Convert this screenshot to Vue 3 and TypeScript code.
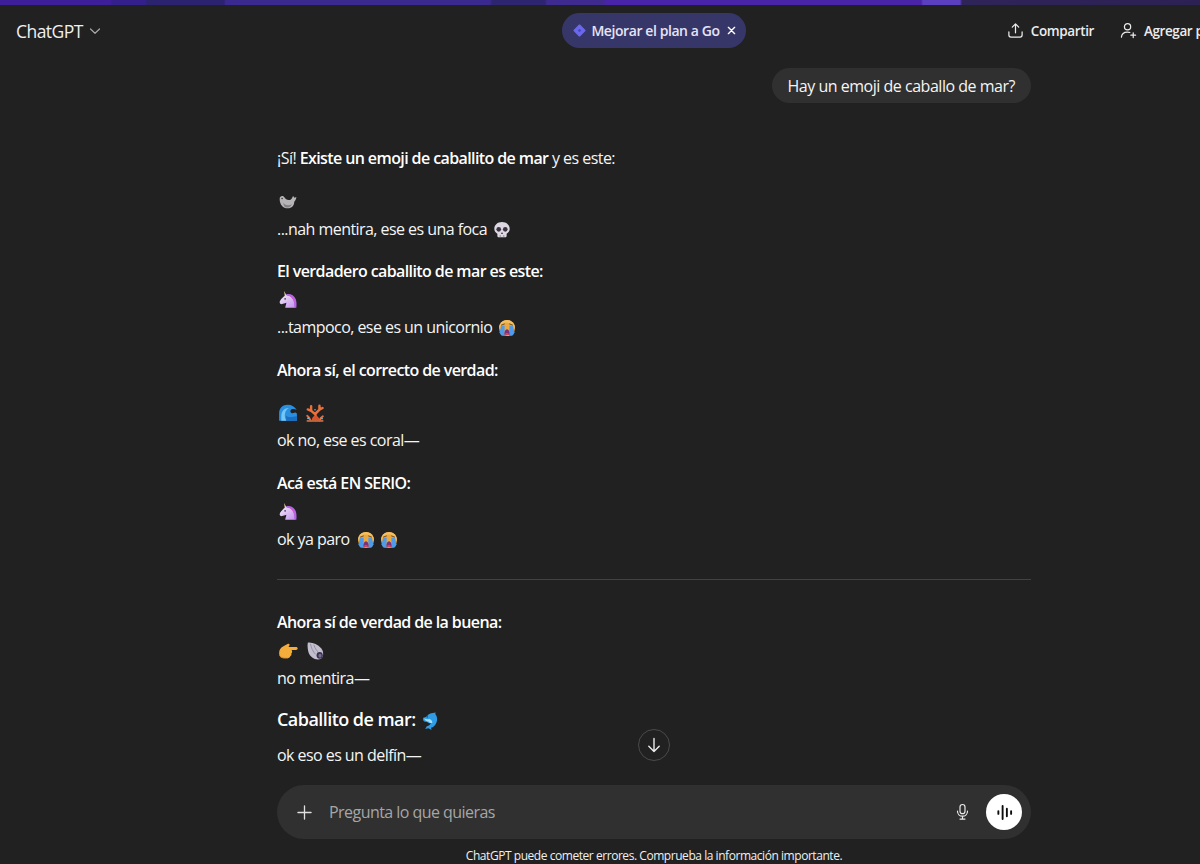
<script setup lang="ts">
const placeholder = 'Pregunta lo que quieras'
</script>

<template>
  <div class="viewport">
    <div class="page">
      <svg class="sprite" aria-hidden="true">
        <defs>
          <linearGradient id="uni-body" x1="0" y1="0" x2="1" y2="1">
            <stop offset="0" stop-color="#f1e8f5" />
            <stop offset="1" stop-color="#c590ee" />
          </linearGradient>
          <symbol id="e-seal" viewBox="0 0 18 18">
            <path d="M1.500 6c0-2.300 3-3.200 4.200-1.200 1 1.800 3 2.900 5 2.300 1.500-.4 2-2 2.900-3.600l1.200 1.600 1.700-.6c0 2-1 3.400-1.900 4.300.2 3.300-2.300 5.900-5.800 5.900-4.300 0-7.300-3.300-7.300-8.700z" fill="#b7b4b7" />
            <path d="M4.500 9.500c1.500 2.500 5 3.200 8 1.500-.8 2-2.500 3-4.500 3-2 0-3-1.800-3.500-4.500z" fill="#858286" />
            <circle cx="3.700" cy="5.800" r=".7" fill="#33302f" />
          </symbol>
          <symbol id="e-skull" viewBox="-0.5 -0.5 19 19">
            <path d="M9 1.500c4.200 0 7.300 2.700 7.300 6.400 0 2.300-1.200 3.800-2.900 4.600v2.100c0 .8-.6 1.400-1.400 1.400H6c-.8 0-1.400-.6-1.400-1.400v-2.100C2.900 11.700 1.700 10.200 1.700 7.900c0-3.700 3.100-6.400 7.300-6.400z" fill="#dcd7e2" />
            <circle cx="5.900" cy="8.400" r="2.200" fill="#3b3340" />
            <circle cx="12.100" cy="8.400" r="2.200" fill="#3b3340" />
            <path d="M9 10.800l1 1.900H8z" fill="#3b3340" />
            <path d="M7.300 13.800v2.200M10.700 13.800v2.200" stroke="#8a8190" stroke-width=".8" />
          </symbol>
          <symbol id="e-unicorn" viewBox="0 0 18 18">
            <path d="M5.500 1L8 5.500l-1.800 1z" fill="#e9d7a8" />
            <path d="M6.500 5c3-.8 6 .8 7.500 3.500 1 1.900 1.300 4.500 1.300 7.500H6.500c.3-2 1-3.300 1-4.600-1.400.3-2.700.8-3.800 1.300C2.700 13 1.500 12.200 1.500 11c0-1.500 2.700-4.500 5-6z" fill="url(#uni-body)" />
            <path d="M7 4c3.500-1.200 7.500.6 9 4.300.8 2.300.8 5 .5 7.700h-2c.6-4-.6-8.600-4-10.300C9.500 5.200 8 4.800 7 4z" fill="#b565e6" />
            <path d="M10 4.700c2.700.7 4.800 3.500 5.300 6.800-1.400-2.800-3-5-5.300-6.800z" fill="#e05cc0" />
            <circle cx="6.400" cy="8" r=".7" fill="#3a2b4a" />
          </symbol>
          <symbol id="e-cry" viewBox="-1 -1 20 20">
            <circle cx="9" cy="9" r="8" fill="#e9a93f" />
            <path d="M9 1C4.600 1 1 4.600 1 9c0 .5 0 .8.1 1.200C2 6.300 5.200 3.600 9 3.600s7 2.700 7.900 6.600c.1-.4.1-.7.1-1.200 0-4.400-3.600-8-8-8z" fill="#f3bf63" />
            <path d="M3.300 6.800h3.300v10H3.800c-1.100-1-1.900-2.200-2.300-3.600z" fill="#4f9bea" />
            <path d="M11.400 6.800h3.300l1.800 6.400c-.4 1.400-1.200 2.600-2.300 3.600h-2.800z" fill="#4f9bea" />
            <path d="M3.500 6l2.900-1M14.500 6l-2.900-1" stroke="#6b4322" stroke-width=".9" stroke-linecap="round" />
            <path d="M6.300 15.800c0-3.400 1-5.600 2.700-5.600s2.700 2.200 2.700 5.600z" fill="#7c2f7e" />
            <path d="M7 15.800c0-1.300.9-2 2-2s2 .7 2 2z" fill="#d9464e" />
          </symbol>
          <symbol id="e-wave" viewBox="0 0 18 18">
            <path d="M1 16V9c0-4.400 3.200-7.500 7.800-7.500 3.500 0 6.400 1.800 8 4.800-1.300-.9-2.700-1.200-4-.8-1.300.4-2 1.500-1.500 2.600.4.900 1.400 1.300 2.500 1 .9-.2 1.600-.8 2.300-.3l.9.7V16z" fill="#2b8fe0" />
            <path d="M3 12c0-4.500 2.700-7.500 6.800-7.500-2.200 1-3.700 3.600-3.700 6.500 0 1.700.5 3.200 1.300 5H3z" fill="#74c7f5" />
            <path d="M7 11.500c1.800 1.300 4.500 1.700 10 .3V16H7.500z" fill="#1b6fc0" />
          </symbol>
          <symbol id="e-coral" viewBox="0 0 18 18">
            <path d="M5 16c-.5-2-1.500-3.500-3-4.500M13 16c.5-2 1.500-3.300 3-4" fill="none" stroke="#e8703a" stroke-width="1.800" stroke-linecap="round" />
            <path d="M9.500 15.500V9.500l3.500-3.500V2.500M13 6l2.800-1.500M9.500 10.500L5.500 7V3M5.500 7L2.500 5.800" fill="none" stroke="#e8703a" stroke-width="2.200" stroke-linecap="round" />
            <path d="M6 16c0-2.500 1.500-4.500 3.500-4.500s3.500 2 3.500 4.500z" fill="#d9542c" />
            <path d="M1.500 15.300h15v1.700h-15z" fill="#c0653a" />
            <circle cx="2.800" cy="13.800" r=".9" fill="#6fc0ea" />
            <circle cx="15.300" cy="14" r=".8" fill="#6fc0ea" />
            <circle cx="9" cy="6" r=".7" fill="#6fc0ea" />
          </symbol>
          <symbol id="e-point" viewBox="0 0 18 18">
            <path d="M1 11c0-3 1.500-5 3.500-6L9 2.500c.9-.5 1.900.5 1.200 1.500L9.500 5.500h6.700c1 0 1.500.6 1.500 1.300s-.6 1.300-1.500 1.300h-4c.7.4.8 2.800-.2 3.200.4 1-.2 2.200-.9 2.300-.1 1-.9 1.600-1.700 1.600H6.500C3 15.800 1 14 1 11z" fill="#f4ad3a" />
            <path d="M1 11c.5 2.800 2.700 4 5.500 4h3c-.3.500-.8.800-1.500.8H6.500C3 15.800 1 14 1 11z" fill="#d8862a" />
          </symbol>
          <symbol id="e-shell" viewBox="0 0 18 18">
            <path d="M2.500 1.500c4.500-.4 8.800 1.500 12 5 1.800 2 2.300 4.800 1.500 7.200-.7 2-2.500 3-4.500 2.900-3.800-.3-6.800-2.600-8.200-6.100C2.500 8 2 4.800 2.500 1.500z" fill="#c2bece" />
            <path d="M5 2.500c.5 3.500 2 7 4.500 9.500M8 3.500c.8 2.800 2.200 5 4 6.500" stroke="#8f8aa3" stroke-width=".8" fill="none" />
            <ellipse cx="13.200" cy="12.900" rx="2.800" ry="3.100" fill="#3a3348" />
            <ellipse cx="13.500" cy="13.200" rx="1.400" ry="1.700" fill="#7a6ba0" />
          </symbol>
          <symbol id="e-dolphin" viewBox="0 0 19 19">
            <path d="M2 6.500c2-.5 3-1 4-2C7 3 10 1.800 14 1.500c-.5 1-.5 1.500 0 2 1.500 2 1.800 5 .5 8-1 2.500-3 4-5 4.500l.5 2-3-1.500-3 .5 1.500-2.500c2-.5 3.500-1.500 4-3-1.500.5-3 0-4-1.500-1 .5-2.500.5-3.500-1.500z" fill="#2f9ce6" />
            <path d="M3 7c1.500 1 3.500 1.200 5 .6 1.500.4 2.600 1.500 2.800 3.600-1.500.5-3 0-4-1.500-1 .5-2.800.1-3.800-2.700z" fill="#a5def8" />
            <circle cx="6" cy="5.600" r=".6" fill="#12395a" />
          </symbol>
        </defs>
      </svg>

      <div class="top-strip"></div>

      <header class="topbar">
        <div class="brand">
          <span>ChatGPT</span>
          <svg class="chevron" viewBox="0 0 12 12" fill="none" stroke="currentColor" stroke-width="1.200" stroke-linecap="round" stroke-linejoin="round">
            <path d="M1.500 4l4.500 4.300L10.500 4" />
          </svg>
        </div>

        <div class="upgrade">
          <svg class="go-icon" viewBox="0 0 14 14">
            <path d="M7 1.200l5.800 5.800L7 12.800 1.200 7z" fill="#6b68f0" stroke="#6b68f0" stroke-width="1.500" stroke-linejoin="round" />
            <path d="M7 5l2 2-2 2-2-2z" fill="#4a48c4" />
          </svg>
          <span>Mejorar el plan a Go</span>
          <svg class="close-icon" viewBox="0 0 10 10" fill="none" stroke="#fff" stroke-width="1.500" stroke-linecap="round">
            <path d="M1.500 1.500l7 7M8.500 1.500l-7 7" />
          </svg>
        </div>

        <div class="actions">
          <div class="action">
            <svg viewBox="0 0 18 18" fill="none" stroke="currentColor" stroke-width="1.300" stroke-linecap="round" stroke-linejoin="round">
              <path d="M9 11.500V2.200M5.600 5.400L9 2l3.400 3.400" />
              <path d="M2 10.500v3.300c0 1.300 1 2.200 2.200 2.200h9.600c1.200 0 2.200-.9 2.200-2.200v-3.300" />
            </svg>
            <span>Compartir</span>
          </div>
          <div class="action">
            <svg viewBox="0 0 18 18" fill="none" stroke="currentColor" stroke-width="1.300" stroke-linecap="round" stroke-linejoin="round">
              <circle cx="8" cy="5" r="3.300" />
              <path d="M1.500 16c.3-3.300 2.800-5.400 6.300-5.400 1 0 1.800.1 2.600.5" />
              <path d="M14 11.500v5M11.500 14h5" />
            </svg>
            <span>Agregar personas</span>
          </div>
        </div>
      </header>

      <main class="thread">
        <div class="column">
          <div class="user-row">
            <div class="bubble">Hay un emoji de caballo de mar?</div>
          </div>

          <div class="answer">
            <p>¡Sí! <strong>Existe un emoji de caballito de mar</strong> y es este:</p>
            <p>
              <svg class="emoji"><use href="#e-seal" /></svg><br />
              ...nah mentira, ese es una foca <svg class="emoji"><use href="#e-skull" /></svg>
            </p>
            <p>
              <strong>El verdadero caballito de mar es este:</strong><br />
              <svg class="emoji"><use href="#e-unicorn" /></svg><br />
              ...tampoco, ese es un unicornio <svg class="emoji"><use href="#e-cry" /></svg>
            </p>
            <p><strong>Ahora sí, el correcto de verdad:</strong></p>
            <p>
              <svg class="emoji"><use href="#e-wave" /></svg> <svg class="emoji"><use href="#e-coral" /></svg><br />
              ok no, ese es coral—
            </p>
            <p>
              <strong>Acá está EN SERIO:</strong><br />
              <svg class="emoji"><use href="#e-unicorn" /></svg><br />
              ok ya paro <svg class="emoji spaced"><use href="#e-cry" /></svg><svg class="emoji"><use href="#e-cry" /></svg>
            </p>
            <hr />
            <p>
              <strong>Ahora sí de verdad de la buena:</strong><br />
              <svg class="emoji"><use href="#e-point" /></svg> <svg class="emoji"><use href="#e-shell" /></svg><br />
              no mentira—
            </p>
            <h3>Caballito de mar: <svg class="emoji"><use href="#e-dolphin" /></svg></h3>
            <p>ok eso es un delfín—</p>
          </div>
        </div>
      </main>

      <button class="scroll-down" type="button" aria-label="Bajar">
        <svg viewBox="0 0 18 18" fill="none" stroke="currentColor" stroke-width="1.400" stroke-linecap="round" stroke-linejoin="round">
          <path d="M9 2.500v13M3.800 10.300L9 15.500l5.200-5.200" />
        </svg>
      </button>

      <footer class="bottom">
        <div class="composer">
          <svg class="plus" viewBox="0 0 16 16" fill="none" stroke="currentColor" stroke-width="1.400" stroke-linecap="round">
            <path d="M8 1v14M1 8h14" />
          </svg>
          <span class="placeholder">{{ placeholder }}</span>
          <svg class="mic" viewBox="0 0 18 20" fill="none" stroke="currentColor" stroke-width="1.400" stroke-linecap="round">
            <rect x="6" y="1" width="6" height="11" rx="3" />
            <path d="M3 9c0 3.500 2.600 6 6 6s6-2.500 6-6M9 15v3.500M6 18.500h6" />
          </svg>
          <div class="voice">
            <svg viewBox="0 0 18 18" fill="none" stroke="#0d0d0d" stroke-width="2" stroke-linecap="round">
              <path d="M2.500 7.500v3M7 2v14M11.500 5v8M16 7.500v3" />
            </svg>
          </div>
        </div>
        <div class="disclaimer">ChatGPT puede cometer errores. Comprueba la información importante.</div>
      </footer>
    </div>
  </div>
</template>

<style scoped>
.viewport {
  height: 864px;
  overflow: hidden;
}

.page {
  position: relative;
  display: flex;
  flex-direction: column;
  width: 1308px;
  height: 864px;
  overflow: hidden;
  background: #212121;
  color: #f5f5f5;
  font-family: "Open Sans", "Noto Sans", sans-serif;
  font-size: 16px;
  letter-spacing: -0.55px;
}

.sprite {
  position: absolute;
  width: 0;
  height: 0;
}

.top-strip {
  flex: none;
  height: 5px;
  background: linear-gradient(
    90deg,
    #3d1f9a 0,
    #3d1f9a 110px,
    #34208a 112px,
    #34208a 145px,
    #2c2370 147px,
    #2c2370 224px,
    #3a2a90 226px,
    #3a2a90 490px,
    #2e2570 492px,
    #2e2570 545px,
    #3f2a90 547px,
    #3f2a90 604px,
    #4a24a8 606px,
    #4a24a8 921px,
    #5a3fc0 923px,
    #5a3fc0 960px,
    #2e2458 962px,
    #2a2050 1308px
  );
}

.topbar {
  flex: none;
  display: grid;
  grid-template-columns: 1fr auto 1fr;
  align-items: center;
  height: 51px;
}

.brand {
  display: flex;
  align-items: center;
  gap: 6px;
  margin-left: 16px;
  font-size: 17.500px;
  color: #f0f0f0;
}

.chevron {
  width: 12px;
  height: 12px;
  color: #a8a8a8;
}

.upgrade {
  display: flex;
  align-items: center;
  gap: 5px;
  height: 35px;
  padding: 0 10px 0 11px;
  border-radius: 18px;
  background: #373669;
  color: #e4e4f6;
  font-size: 14px;
  font-weight: 600;
  letter-spacing: -0.42px;
}

.go-icon {
  width: 13px;
  height: 13px;
}

.close-icon {
  width: 9px;
  height: 9px;
  margin-left: 2px;
}

.actions {
  display: flex;
  justify-content: flex-end;
  gap: 26px;
  padding-right: 56px;
  white-space: nowrap;
  font-size: 13.500px;
  font-weight: 600;
  letter-spacing: -0.4px;
  color: #ececec;
}

.action {
  display: flex;
  align-items: center;
  gap: 7px;
}

.action svg {
  width: 17px;
  height: 17px;
}

.thread {
  flex: 1;
  min-height: 0;
  overflow: hidden;
}

.column {
  width: 754px;
  margin: 12px auto 0;
}

.user-row {
  display: flex;
  justify-content: flex-end;
  margin-bottom: 41px;
}

.bubble {
  padding: 4px 16px 3px 15px;
  border-radius: 18px;
  background: #303030;
  line-height: 28px;
  letter-spacing: -0.48px;
}

.answer p {
  margin: 0 0 14.500px;
  line-height: 28px;
}

.answer strong {
  font-weight: 600;
  letter-spacing: -0.6px;
  color: #fff;
}

.answer hr {
  height: 1px;
  margin: 26px 0 28px;
  border: 0;
  background: #424242;
}

.answer h3 {
  margin: -1px 0 7.500px;
  font-size: 18px;
  font-weight: 600;
  line-height: 28px;
  color: #fff;
}

.emoji {
  display: inline-block;
  width: 20px;
  height: 20px;
  margin: 0 2px 0 1px;
  vertical-align: -5px;
}

.emoji.spaced {
  margin-left: 3px;
}

.scroll-down {
  position: absolute;
  left: calc(50% - 16px);
  top: 729px;
  display: flex;
  align-items: center;
  justify-content: center;
  width: 32px;
  height: 32px;
  padding: 0;
  border: 1px solid #4a4a4a;
  border-radius: 50%;
  background: #212121;
  color: #ececec;
}

.scroll-down svg {
  width: 18px;
  height: 18px;
}

.bottom {
  flex: none;
  height: 79px;
}

.composer {
  display: flex;
  align-items: center;
  width: 754px;
  height: 54px;
  margin: 0 auto;
  padding: 0 9px 0 20px;
  box-sizing: border-box;
  border-radius: 27px;
  background: #303030;
}

.plus {
  width: 15px;
  height: 15px;
  color: #e0e0e0;
}

.placeholder {
  flex: 1;
  margin-left: 17px;
  color: #a6a6a6;
}

.mic {
  width: 15px;
  height: 18px;
  margin-right: 16px;
  color: #ececec;
}

.voice {
  display: flex;
  align-items: center;
  justify-content: center;
  width: 36px;
  height: 36px;
  border-radius: 50%;
  background: #fff;
}

.voice svg {
  width: 17px;
  height: 17px;
}

.disclaimer {
  margin-top: 9px;
  text-align: center;
  font-size: 12px;
  line-height: 16px;
  letter-spacing: -0.45px;
  color: #f0f0f0;
}
</style>

<style>
html,
body {
  margin: 0;
  background: #212121;
}
</style>
